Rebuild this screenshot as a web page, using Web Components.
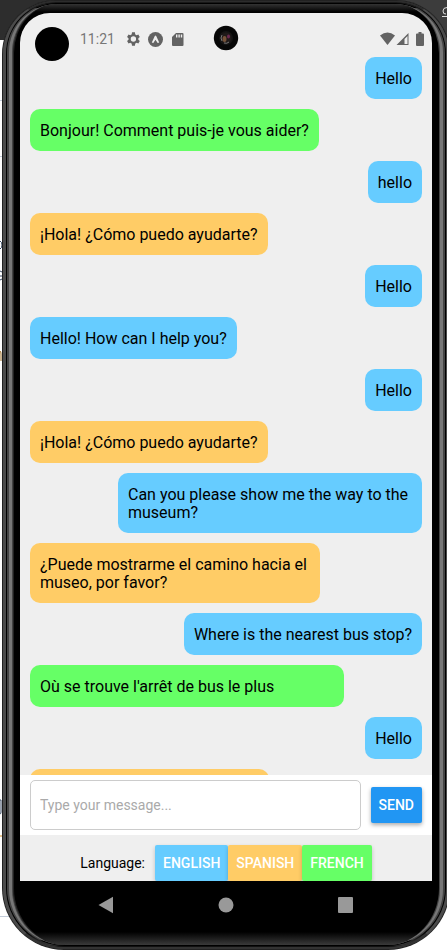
<!DOCTYPE html>
<html lang="en">
<head>
<meta charset="utf-8">
<meta name="viewport" content="width=device-width, initial-scale=1">
<title>Chat</title>
<style>
html,body{margin:0;height:100%}
body{font-family:Roboto,"Liberation Sans",sans-serif;color:#000;background:#fff;overflow:hidden}
</style>
</head>
<body>
<emulator-stage>
  <phone-frame>
    <status-bar time="11:21"></status-bar>
    <chat-log>
      <chat-bubble lang="en" mine>Hello</chat-bubble>
      <chat-bubble lang="fr">Bonjour! Comment puis-je vous aider?</chat-bubble>
      <chat-bubble lang="en" mine>hello</chat-bubble>
      <chat-bubble lang="es">¡Hola! ¿Cómo puedo ayudarte?</chat-bubble>
      <chat-bubble lang="en" mine>Hello</chat-bubble>
      <chat-bubble lang="en">Hello! How can I help you?</chat-bubble>
      <chat-bubble lang="en" mine>Hello</chat-bubble>
      <chat-bubble lang="es">¡Hola! ¿Cómo puedo ayudarte?</chat-bubble>
      <chat-bubble lang="en" mine style="width:19rem">Can you please show me the way to the museum?</chat-bubble>
      <chat-bubble lang="es" style="width:74%">¿Puede mostrarme el camino hacia el museo, por favor?</chat-bubble>
      <chat-bubble lang="en" mine>Where is the nearest bus stop?</chat-bubble>
      <chat-bubble lang="fr" style="width:80%">Où se trouve l'arrêt de bus le plus</chat-bubble>
      <chat-bubble lang="en" mine>Hello</chat-bubble>
      <chat-bubble lang="es" style="width:61%"></chat-bubble>
    </chat-log>
    <message-composer></message-composer>
    <language-picker></language-picker>
    <nav-bar slot="nav"></nav-bar>
  </phone-frame>
</emulator-stage>
<script>
const define = (name, html, setup) => customElements.define(name, class extends HTMLElement {
  constructor() {
    super();
    this.attachShadow({ mode: 'open' }).innerHTML = html;
  }
  connectedCallback() { if (setup) setup(this, this.shadowRoot); }
});

define('emulator-stage', `
<style>
:host{display:block;position:relative;height:100vh;overflow:hidden;box-sizing:border-box;padding-left:2px;
 background:linear-gradient(#3c3c3c,#3c3c3c) 100% 0/50% 90px no-repeat,
 linear-gradient(#2d2d2d,#2d2d2d) 0 0/50% 40px no-repeat,
 linear-gradient(#c3ccd9,#c3ccd9) 0 100px/8px 1px no-repeat,
 linear-gradient(#c3ccd9,#c3ccd9) 0 156px/8px 1px no-repeat,
 linear-gradient(#c3ccd9,#c3ccd9) 0 916px/16px 1px no-repeat,#fff}
.edge{position:absolute;inset:0 auto auto 0;width:3px;height:950px}
.corner{position:absolute;top:6px;right:0;width:5px;height:12px}
</style>
<svg class="edge" viewBox="0 0 3 950" fill="none" stroke="#34455f" aria-hidden="true">
<path d="M0 241q2 1 2 4t-2 4"/><path d="M0 271l2 1M0 276h2M0 280l2-1"/><path d="M0 351q1 0 1 3v7" stroke="#9a6a22"/><path d="M0 800h1v12q0 2-1 2"/><path d="M1 835v2" stroke="#d08a20"/>
</svg>
<slot></slot>
<svg class="corner" viewBox="0 0 5 12" fill="none" stroke="#ddd" aria-hidden="true"><path d="M5 1.500Q1 1.500 1 5t3 3M0 10.500h5"/></svg>`);

define('phone-frame', `
<style>
:host{display:flex;flex-direction:column;box-sizing:border-box;height:100%;position:relative;margin-right:-3px;
 padding:13px 18px 14px;border-radius:54px 54px 62px 62px;
 background:linear-gradient(transparent 3px,#333 4px,#000 12px,#000 calc(100% - 18px),#3a3a3a calc(100% - 5px),#111 calc(100% - 4px)),#000;
 box-shadow:inset 0 0 0 1px #222,inset 0 0 0 2px #3c3c3c,inset 0 0 0 3px #181818}
.rim,.ring{position:absolute;pointer-events:none;border-style:solid;box-sizing:border-box}
.rim{inset:1px;border-width:1px 3px 2px;border-color:#2c2c2c #4b4b4b #333;border-radius:53px 53px 61px 61px}
.ring{inset:3px 5px 4px;border-width:1px 6px;border-color:#000 #444 #000;border-radius:50px 50px 58px 58px;
 box-shadow:inset 1px 0 #222}
.ring::after{content:"";position:absolute;inset:0 -4px;border:solid #777;border-width:0 3px;border-radius:48px 48px 56px 56px}
.screen{flex:1;min-height:0;display:flex;flex-direction:column;background:#efefef;border-radius:30px 30px 0 0;overflow:hidden;position:relative}
</style>
<i class="rim"></i><i class="ring"></i>
<main class="screen"><slot></slot></main><slot name="nav"></slot>`);

define('status-bar', `
<style>
:host{display:flex;align-items:center;height:44px;padding:0 7px 0 15px;box-sizing:border-box;position:relative;flex:none}
.dot{width:34px;height:34px;border-radius:50%;background:#000;margin-top:18px}
time{font-size:14px;color:#777;margin:8px 0 0 11px}
.l,.r{display:flex;align-items:center;margin-top:8px}
.l{gap:7px;margin-left:10px}.r{margin-left:auto}
svg{display:block;fill:#636363}
.cam{position:absolute;left:50%;top:12px;margin-left:-13px}
</style>
<span class="dot"></span><time></time>
<span class="l">
<svg width="16" height="16" viewBox="0 0 24 24"><path d="M20 13.200a8 8 0 0 0 0-2.400l2.200-1.700-2.200-3.800-2.600 1a8 8 0 0 0-2.100-1.200L14.900 2h-4.400l-.5 3.100a8 8 0 0 0-2.100 1.200l-2.600-1-2.200 3.800 2.200 1.700a8 8 0 0 0 0 2.400l-2.200 1.700 2.200 3.800 2.600-1a8 8 0 0 0 2.100 1.200l.5 3.100h4.400l.4-3.100a8 8 0 0 0 2.100-1.200l2.600 1 2.200-3.800zM12.600 16a4 4 0 1 1 0-8 4 4 0 0 1 0 8z" fill-rule="evenodd"/></svg>
<svg width="15" height="15" viewBox="0 0 15 15"><circle cx="7.500" cy="7.500" r="7.500"/><path d="M3.800 10.500L6.800 4q.7-.9 1.400 0l3 6.500-1.500.5L7.500 7.800 5.300 11z" fill="#efefef"/></svg>
<svg width="15" height="15" viewBox="0 0 15 15"><path d="M6 1h6.500q1 0 1 1v11q0 1-1 1H3q-1 0-1-1V5z"/><path d="M6 2.500h1.400v3H6zm2.400 0h1.400v3H8.400zm2.400 0h1.400v3h-1.400z" fill="#efefef"/></svg>
</span>
<svg class="cam" width="26" height="26" viewBox="0 0 26 26"><circle cx="13" cy="13" r="12.200" fill="#070707"/><circle cx="13" cy="13" r="7" fill="#151414"/><circle cx="13" cy="13" r="5.500" fill="#201a19"/><ellipse cx="11.500" cy="14" rx="2" ry="3" fill="#765339"/><ellipse cx="15.500" cy="11.500" rx="1.500" ry="2" fill="#6a294f"/><path d="M9 10q-2 3 0 6M11 18q3 1 5-1" stroke="#777" fill="none"/></svg>
<span class="r">
<svg width="15" height="14" viewBox="0 0 15 14"><path d="M0 3.500Q7.500-2.500 15 3.500L7.500 13z"/></svg>
<svg width="14" height="14" viewBox="0 0 14 14"><path d="M13.500 1v12h-12zM12.500 4L9.500 7v5h3z" fill-rule="evenodd"/></svg>
<svg width="16" height="14" viewBox="0 0 16 14"><path d="M9.500 0h3v1.500H14q1 0 1 1V13q0 1-1 1H8q-1 0-1-1V2.500q0-1 1-1h1.500z"/></svg>
</span>`, (el, root) => { root.querySelector('time').textContent = el.getAttribute('time'); });

define('chat-log', `
<style>:host{display:flex;flex-direction:column;gap:10px;flex:1;min-height:0;overflow:hidden;padding:0 10px}</style><slot></slot>`);

define('chat-bubble', `
<style>
:host{display:block;flex:none;box-sizing:border-box;align-self:flex-start;padding:13px 10px 11px;min-height:42px;border-radius:10px;max-width:80%;font-size:16px;line-height:18px;background:#66ccff}
:host([mine]){align-self:flex-end}
:host([lang=fr]){background:#66ff66}
:host([lang=es]){background:#ffcc66}
</style><slot></slot>`);

define('message-composer', `
<style>
:host{display:block;flex:none;background:#fff}
form{display:flex;align-items:center;gap:10px;padding:5px 10px;height:50px}
input{flex:1;min-width:0;height:50px;box-sizing:border-box;border:1px solid #ccc;border-radius:5px;padding:0 9px;font:14px Roboto,sans-serif;background:#fff;color:#111;outline:0}
input::placeholder{color:#aaa;opacity:1}
button{border:0;border-radius:2px;background:#2196f3;color:#fff;font:500 14px Roboto,sans-serif;height:36px;padding:0 8px;box-shadow:0 2px 4px #0005}
</style>
<form onsubmit="return false"><input type="text" aria-label="Message" placeholder="Type your message..."><button type="submit">SEND</button></form>`);

define('language-picker', `
<style>
:host{display:flex;flex:none;align-items:center;justify-content:center;padding:10px 0 0;font-size:14px}
span{margin-right:10px}
button{border:0;border-radius:2px;color:#fff;font:500 14px Roboto,sans-serif;height:36px;padding:0 8px;box-shadow:0 2px 4px #0003}
.en{background:#66ccff}.es{background:#ffcc66}.fr{background:#66ff66}
</style>
<span>Language:</span><button class="en">ENGLISH</button><button class="es">SPANISH</button><button class="fr">FRENCH</button>`);

define('nav-bar', `
<style>
:host{display:flex;flex:none;height:55px;padding:0 60px;align-items:flex-start;justify-content:space-between;position:relative}
button{border:0;background:none;padding:15px 0 0;width:52px;display:grid;place-items:center}
svg{fill:#999}
</style>
<button aria-label="Back"><svg width="18" height="18" viewBox="0 0 18 18"><path d="M1.500 9L16 .8v16.400z"/></svg></button>
<button aria-label="Home"><svg width="18" height="18" viewBox="0 0 18 18"><circle cx="9" cy="9" r="7.500"/></svg></button>
<button aria-label="Overview"><svg width="18" height="18" viewBox="0 0 18 18"><rect x="1" y="1" width="15" height="16" rx="1"/></svg></button>`);
</script>
</body>
</html>
